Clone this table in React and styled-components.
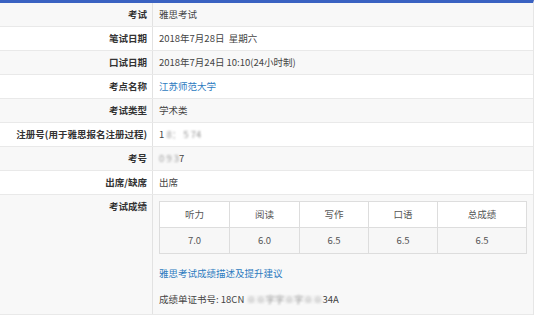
import React from 'react'
import styled, { createGlobalStyle } from 'styled-components'

const GlobalStyle = createGlobalStyle`
  body {
    margin: 0;
    background: #fff;
    font-family: "Noto Sans CJK SC", "Noto Sans", sans-serif;
    font-size: 9.5px;
    line-height: 13px;
    color: #333;
  }
`;

const Page = styled.div`
  width: 533px;
  border-top: 3px solid #3a62c2;
  border-right: 1px solid #e6e6e6;
  box-shadow: inset 0 1px 0 #dfeaf8;
`;

const Row = styled.div`
  display: grid;
  grid-template-columns: 153px 1fr;
  min-height: 23px;
  background: ${(props) => (props.$alt ? '#f8f8f8' : '#fff')};
  border-bottom: 1px solid #e9e9e9;
`;

const Label = styled.div`
  font-weight: bold;
  text-align: right;
  padding: 5px 5px 0 0;
  border-right: 1px solid #e2e2e2;
  color: #333;
`;

const Value = styled.div`
  padding: ${(props) => (props.$block ? '6px 6px 0 6px' : '5px 0 0 6px')};
  color: ${(props) => (props.$link ? '#2d7bbf' : '#444')};
`;

const Blur = styled.span`
  filter: blur(1.1px);
  color: #999;
`;

const ScoreTable = styled.div`
  display: grid;
  grid-template-columns: 70px 70px 69px 69px 1fr;
  border-top: 1px solid #ddd;
  border-left: 1px solid #ddd;
  margin-bottom: 13px;
`;

const Cell = styled.div`
  height: 25px;
  display: flex;
  align-items: center;
  justify-content: center;
  border-right: 1px solid #ddd;
  border-bottom: 1px solid #ddd;
  background: ${(props) => (props.$head ? '#fff' : '#f7f7f7')};
  color: #555;
`;

const Link = styled.div`
  color: #2d7bbf;
  margin-bottom: 13px;
`;

const Cert = styled.div`
  color: #444;
  padding-bottom: 8px;
`;

const rows = [
  ['考试', '雅思考试'],
  ['笔试日期', '2018年7月28日\u00a0\u00a0星期六'],
  ['口试日期', '2018年7月24日 10:10(24小时制)'],
  ['考点名称', '江苏师范大学', true],
  ['考试类型', '学术类'],
]

const heads = ['听力', '阅读', '写作', '口语', '总成绩']
const scores = ['7.0', '6.0', '6.5', '6.5', '6.5']

export default function App() {
  return (
    <>
      <GlobalStyle />
      <Page>
        {rows.map(([label, value, link], i) => (
          <Row key={label} $alt={i % 2 === 0}>
            <Label>{label}</Label>
            <Value $link={link}>{value}</Value>
          </Row>
        ))}
        <Row>
          <Label>注册号(用于雅思报名注册过程)</Label>
          <Value>1<Blur>&nbsp;8：&nbsp;5 74</Blur></Value>
        </Row>
        <Row $alt>
          <Label>考号</Label>
          <Value><Blur>0&nbsp;9&nbsp;3</Blur>7</Value>
        </Row>
        <Row>
          <Label>出席/缺席</Label>
          <Value>出席</Value>
        </Row>
        <Row $alt>
          <Label>考试成绩</Label>
          <Value $block>
            <ScoreTable>
              {heads.map((h) => <Cell key={h} $head>{h}</Cell>)}
              {scores.map((s, i) => <Cell key={i}>{s}</Cell>)}
            </ScoreTable>
            <Link>雅思考试成绩描述及提升建议</Link>
            <Cert>成绩单证书号: 18CN<Blur>&nbsp;※※字字※字※※</Blur>34A</Cert>
          </Value>
        </Row>
      </Page>
    </>
  )
}
